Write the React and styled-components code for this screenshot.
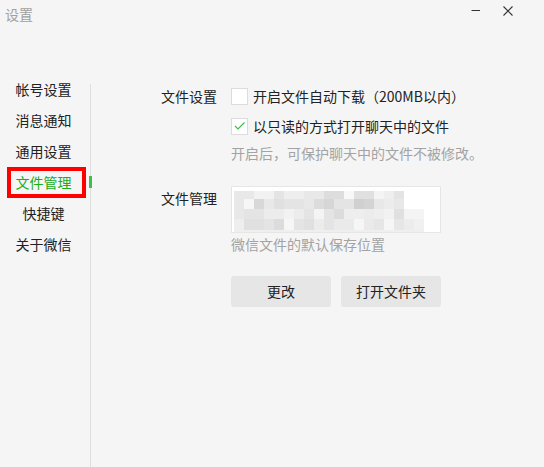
import React from 'react';
import styled, { createGlobalStyle } from 'styled-components';

const GlobalStyle = createGlobalStyle`
  html, body {
    margin: 0;
    padding: 0;
    background: #f5f5f5;
  }
  body {
    font-family: "Noto Sans CJK SC", "Noto Sans", sans-serif;
    color: #333;
  }
`;

const Window = styled.div`
  width: 544px;
  height: 467px;
  background: #f5f5f5;
  display: flex;
  flex-direction: column;
  overflow: hidden;
`;

const TitleBar = styled.div`
  height: 28px;
  display: flex;
  align-items: flex-start;
  justify-content: space-between;
  padding-left: 5px;
  box-sizing: border-box;
`;

const Title = styled.div`
  font-size: 14px;
  line-height: 14px;
  margin-top: 7px;
  color: #a0a0a0;
`;

const Controls = styled.div`
  display: flex;
  align-items: flex-start;
  padding-right: 20px;
`;

const CtrlButton = styled.div`
  width: 32px;
  height: 21px;
  display: flex;
  align-items: center;
  justify-content: center;
  color: #444;
`;

const Body = styled.div`
  flex: 1;
  display: flex;
  margin-top: 46px;
`;

const Sidebar = styled.div`
  width: 90px;
  display: flex;
  flex-direction: column;
`;

const NavItem = styled.div`
  position: relative;
  box-sizing: border-box;
  width: 79px;
  height: 31px;
  margin-left: 7px;
  padding: 0 10px 0 4px;
  border: 4px solid ${(p) => (p.$active ? '#ff0000' : 'transparent')};
  font-size: 14px;
  line-height: 23px;
  text-align: center;
  color: ${(p) => (p.$active ? '#1aad19' : '#222')};
  white-space: nowrap;
`;

const Indicator = styled.span`
  position: absolute;
  left: 78px;
  top: 5px;
  width: 3px;
  height: 12px;
  background: #3fbf4a;
`;

const Divider = styled.div`
  width: 1px;
  margin-top: 10px;
  background: #dedede;
`;

const Content = styled.div`
  flex: 1;
  padding: 12px 0 0 70px;
  display: flex;
  flex-direction: column;
`;

const Section = styled.div`
  display: flex;
  margin-top: ${(p) => p.$top || 0}px;
`;

const Label = styled.div`
  width: 70px;
  font-size: 14px;
  line-height: 20px;
  color: #222;
  margin-top: ${(p) => p.$top || 0}px;
  flex-shrink: 0;
`;

const Fields = styled.div`
  display: flex;
  flex-direction: column;
`;

const CheckRow = styled.label`
  display: flex;
  align-items: center;
  height: 20px;
  margin-top: ${(p) => p.$top || 0}px;
  font-size: 14px;
  color: #222;
`;

const Box = styled.span`
  width: 17px;
  height: 17px;
  box-sizing: border-box;
  border: 1px solid #dcdcdc;
  background: #fff;
  margin-right: 5px;
  display: flex;
  align-items: center;
  justify-content: center;
`;

const Hint = styled.div`
  font-size: 14px;
  line-height: 20px;
  color: #a3a3a3;
  margin-top: ${(p) => p.$top || 0}px;
  white-space: nowrap;
`;

const PathBox = styled.div`
  width: 210px;
  height: 47px;
  box-sizing: border-box;
  border: 1px solid #e6e6e6;
  background: #fff;
`;

const Buttons = styled.div`
  display: flex;
  gap: 10px;
  margin-top: 22px;
`;

const Button = styled.div`
  width: 100px;
  height: 31px;
  border-radius: 3px;
  background: #e6e6e6;
  font-size: 14px;
  line-height: 31px;
  text-align: center;
  color: #222;
`;

const mosaic = [
  { h: 8, c: ['e8', 'e8', 'f2', 'f2', 'e4', 'ee', 'ee', 'e8', 'e8', 'dd', 'dd', 'f8', 'e0', 'e0', 'f4', 'ee', 'e4'] },
  { h: 10, c: ['e8', 'f6', 'd8', 'e8', 'e0', 'e4', 'e4', 'e8', 'dc', 'd6', 'e4', 'e4', 'd0', 'd4', 'e8', 'ec', 'e8'] },
  { h: 10, c: ['e8', 'e4', 'e4', 'ec', 'ec', 'f2', 'ec', 'e4', 'f4', 'e4', 'dc', 'ee', 'ee', 'ec', 'ee', 'f2', 'e0', 'f4', 'f4'] },
  { h: 11, c: ['ee', 'e0', 'e0', 'e4', 'dc', 'f6', 'e4', 'e0', 'ec', 'e4', 'ea', 'ea', 'f6', 'ea', 'e6', 'f6', 'e6', 'ec', 'f0'] },
];

function Mosaic() {
  let y = 4;
  const rects = [];
  mosaic.forEach((row, r) => {
    row.c.forEach((v, i) => {
      rects.push(
        <rect key={`${r}-${i}`} x={2 + i * 10} y={y} width={10} height={row.h} fill={`#${v}${v}${v}`} />
      );
    });
    y += row.h;
  });
  return (
    <svg width="208" height="45" viewBox="0 0 208 45">
      {rects}
      <rect x="2" y={y} width="190" height="2" fill="#efefef" />
    </svg>
  );
}

const navItems = ['帐号设置', '消息通知', '通用设置', '文件管理', '快捷键', '关于微信'];

export default function App() {
  return (
    <Window>
      <GlobalStyle />
      <TitleBar>
        <Title>设置</Title>
        <Controls>
          <CtrlButton>
            <svg width="10" height="10" viewBox="0 0 10 10">
              <line x1="0.5" y1="4.5" x2="9" y2="4.5" stroke="#333" strokeWidth="1" />
            </svg>
          </CtrlButton>
          <CtrlButton>
            <svg width="10" height="10" viewBox="0 0 10 10">
              <path d="M0.5 0.5 L9.5 9.5 M9.5 0.5 L0.5 9.5" stroke="#333" strokeWidth="1.1" />
            </svg>
          </CtrlButton>
        </Controls>
      </TitleBar>
      <Body>
        <Sidebar>
          {navItems.map((item) => (
            <NavItem key={item} $active={item === '文件管理'}>
              {item}
              {item === '文件管理' && <Indicator />}
            </NavItem>
          ))}
        </Sidebar>
        <Divider />
        <Content>
          <Section>
            <Label>文件设置</Label>
            <Fields>
              <CheckRow>
                <Box />
                开启文件自动下载（200MB以内）
              </CheckRow>
              <CheckRow $top={10}>
                <Box>
                  <svg width="12" height="10" viewBox="0 0 12 10">
                    <polyline points="1,5 4,8 10.5,1.5" fill="none" stroke="#3fbf4a" strokeWidth="1.2" />
                  </svg>
                </Box>
                以只读的方式打开聊天中的文件
              </CheckRow>
              <Hint $top={7}>开启后，可保护聊天中的文件不被修改。</Hint>
            </Fields>
          </Section>
          <Section $top={23}>
            <Label $top={2}>文件管理</Label>
            <Fields>
              <PathBox>
                <Mosaic />
              </PathBox>
              <Hint $top={1}>微信文件的默认保存位置</Hint>
              <Buttons>
                <Button>更改</Button>
                <Button>打开文件夹</Button>
              </Buttons>
            </Fields>
          </Section>
        </Content>
      </Body>
    </Window>
  );
}
